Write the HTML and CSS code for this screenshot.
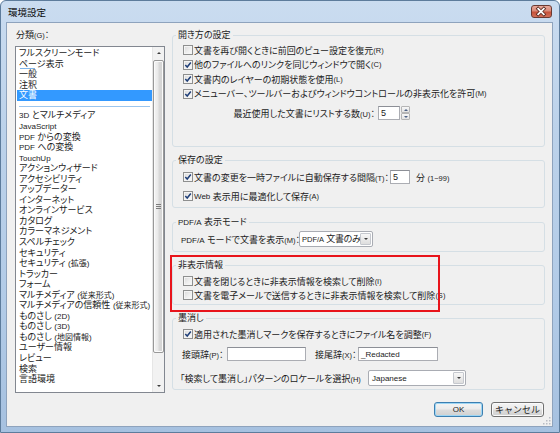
FILE: index.html
```html
<!DOCTYPE html>
<html lang="ja">
<head>
<meta charset="utf-8">
<title>環境設定</title>
<link rel="stylesheet" href="styles.css">
</head>
<body>
<div class="window">
  <div class="titlebar">
    <span class="title">環境設定</span>
    <span class="close"><svg viewBox="0 0 21 13" width="21" height="13"><path d="M7.5 3.5 L13.5 9.5 M13.5 3.5 L7.5 9.5" stroke="#5a2a22" stroke-width="3.6" stroke-linecap="square"/><path d="M7.5 3.5 L13.5 9.5 M13.5 3.5 L7.5 9.5" stroke="#ffffff" stroke-width="1.8" stroke-linecap="square"/></svg></span>
  </div>
  <div class="client">
    <div class="main">
      <div class="left">
        <div class="cat-label">分類<span class="mn">(G)</span>：</div>
        <div class="listbox">
          <ul class="items">
            <li>フルスクリーンモード</li>
            <li class="focus">ページ表示</li>
            <li>一般</li>
            <li>注釈</li>
            <li class="sel">文書</li>
            <li class="sep"></li>
            <li><span class="lt">3D</span> とマルチメディア</li>
            <li><span class="lt">JavaScript</span></li>
            <li><span class="lt">PDF</span> からの変換</li>
            <li><span class="lt">PDF</span> への変換</li>
            <li><span class="lt">TouchUp</span></li>
            <li>アクションウィザード</li>
            <li>アクセシビリティ</li>
            <li>アップデーター</li>
            <li>インターネット</li>
            <li>オンラインサービス</li>
            <li>カタログ</li>
            <li>カラーマネジメント</li>
            <li>スペルチェック</li>
            <li>セキュリティ</li>
            <li>セキュリティ <span class="sm">(拡張)</span></li>
            <li>トラッカー</li>
            <li>フォーム</li>
            <li>マルチメディア <span class="sm">(従来形式)</span></li>
            <li>マルチメディアの信頼性 <span class="sm">(従来形式)</span></li>
            <li>ものさし <span class="sm">(2D)</span></li>
            <li>ものさし <span class="sm">(3D)</span></li>
            <li>ものさし <span class="sm">(地図情報)</span></li>
            <li>ユーザー情報</li>
            <li>レビュー</li>
            <li>検索</li>
            <li>言語環境</li>
          </ul>
          <div class="scrollbar">
            <div class="sb-btn"><span class="arr up"></span></div>
            <div class="sb-track">
              <div class="sb-thumb"><span class="grip"></span></div>
            </div>
            <div class="sb-btn"><span class="arr down"></span></div>
          </div>
        </div>
      </div>
      <div class="right">
        <fieldset class="group g1">
          <legend>開き方の設定</legend>
          <div class="row cbrow"><span class="cb"></span>文書を再び開くときに前回のビュー設定を復元<span class="mn">(R)</span></div>
          <div class="row cbrow"><span class="cb"><svg viewBox="0 0 8 8" width="8" height="8"><path d="M1.3 4 L3.2 6 L6.8 1.5" fill="none" stroke="#1f3f78" stroke-width="1.5"/></svg></span>他のファイルへのリンクを同じウィンドウで開く<span class="mn">(C)</span></div>
          <div class="row cbrow"><span class="cb"><svg viewBox="0 0 8 8" width="8" height="8"><path d="M1.3 4 L3.2 6 L6.8 1.5" fill="none" stroke="#1f3f78" stroke-width="1.5"/></svg></span>文書内のレイヤーの初期状態を使用<span class="mn">(L)</span></div>
          <div class="row cbrow"><span class="cb"><svg viewBox="0 0 8 8" width="8" height="8"><path d="M1.3 4 L3.2 6 L6.8 1.5" fill="none" stroke="#1f3f78" stroke-width="1.5"/></svg></span>メニューバー、ツールバーおよびウィンドウコントロールの非表示化を許可<span class="mn">(M)</span></div>
          <div class="row spinrow">
            <span class="spinlabel">最近使用した文書にリストする数<span class="mn">(U)</span>：</span>
            <span class="input spin-in">5</span>
            <span class="spinbtns"><span class="sp"><span class="arr up"></span></span><span class="sp"><span class="arr down"></span></span></span>
          </div>
        </fieldset>

        <fieldset class="group g2">
          <legend>保存の設定</legend>
          <div class="row cbrow tall"><span class="cb"><svg viewBox="0 0 8 8" width="8" height="8"><path d="M1.3 4 L3.2 6 L6.8 1.5" fill="none" stroke="#1f3f78" stroke-width="1.5"/></svg></span><span class="savelabel">文書の変更を一時ファイルに自動保存する間隔<span class="mn">(T)</span>：</span><span class="input min-in">5</span><span class="unit">分 <span class="mn">(1~99)</span></span></div>
          <div class="row cbrow gap4"><span class="cb"><svg viewBox="0 0 8 8" width="8" height="8"><path d="M1.3 4 L3.2 6 L6.8 1.5" fill="none" stroke="#1f3f78" stroke-width="1.5"/></svg></span><span class="lt">Web</span>&nbsp;表示用に最適化して保存<span class="mn">(A)</span></div>
        </fieldset>

        <fieldset class="group g3">
          <legend><span class="lt">PDF/A</span> 表示モード</legend>
          <div class="row tall"><span class="pdfalabel"><span class="lt">PDF/A</span> モードで文書を表示<span class="mn">(M)</span>：</span><span class="combo pdfa-combo"><span class="combo-text"><span class="lt">PDF/A</span> 文書のみ</span><span class="combo-btn"><span class="arr down"></span></span></span></div>
        </fieldset>

        <fieldset class="group g4">
          <legend>非表示情報</legend>
          <div class="row cbrow"><span class="cb"></span>文書を閉じるときに非表示情報を検索して削除<span class="mn">(I)</span></div>
          <div class="row cbrow"><span class="cb"></span>文書を電子メールで送信するときに非表示情報を検索して削除<span class="mn">(S)</span></div>
        </fieldset>

        <fieldset class="group g5">
          <legend>墨消し</legend>
          <div class="row cbrow"><span class="cb"><svg viewBox="0 0 8 8" width="8" height="8"><path d="M1.3 4 L3.2 6 L6.8 1.5" fill="none" stroke="#1f3f78" stroke-width="1.5"/></svg></span>適用された墨消しマークを保存するときにファイル名を調整<span class="mn">(F)</span></div>
          <div class="row tall r2"><span class="fixlabel l-pre">接頭辞<span class="mn">(P)</span>：</span><span class="input text-in pre-in"></span><span class="fixlabel l-suf">接尾辞<span class="mn">(X)</span>：</span><span class="input text-in suf-in"><span class="lt">_Redacted</span></span></div>
          <div class="row tall r3"><span class="fixlabel l-loc">「検索して墨消し」パターンのロケールを選択<span class="mn">(H)</span></span><span class="combo loc-combo"><span class="combo-text"><span class="lt">Japanese</span></span><span class="combo-btn"><span class="arr down"></span></span></span></div>
        </fieldset>
      </div>
    </div>
    <div class="footer">
      <button class="btn default"><span class="lt">OK</span></button>
      <button class="btn">キャンセル</button>
    </div>
  </div>
  <div class="highlight"></div>
  <svg class="sizegrip" viewBox="0 0 8 8" width="8" height="8"><g fill="#b8bcc4"><rect x="6" y="0" width="1.5" height="1.5"/><rect x="3" y="3" width="1.5" height="1.5"/><rect x="6" y="3" width="1.5" height="1.5"/><rect x="0" y="6" width="1.5" height="1.5"/><rect x="3" y="6" width="1.5" height="1.5"/><rect x="6" y="6" width="1.5" height="1.5"/></g></svg>
</div>
</body>
</html>
```

FILE: styles.css
```css
* { box-sizing: border-box; }
html, body { margin: 0; padding: 0; }
body {
  width: 560px;
  height: 433px;
  overflow: hidden;
  font-family: "Liberation Sans", "Noto Sans CJK JP", sans-serif;
  font-size: 9px;
  color: #1b1b1b;
  font-feature-settings: "palt";
  background: #ffffff;
}

.window {
  position: relative;
  width: 560px;
  height: 433px;
  display: flex;
  flex-direction: column;
  padding: 0 6px 5px 5px;
  border: 1px solid #5d7c9c;
  border-radius: 6px 6px 0 0;
  background: linear-gradient(#cadcf0 0%, #bcd2ea 30%, #b2cbe7 70%, #a6c1e0 100%);
}

.titlebar {
  height: 21px;
  flex: none;
  display: flex;
  justify-content: space-between;
  align-items: flex-start;
}
.title {
  margin: 6px 0 0 2px;
  font-size: 9.5px;
  line-height: 11px;
  color: #0c0c0c;
}
.close {
  margin: 4px 1px 0 0;
  width: 21px;
  height: 13px;
  border: 1px solid #6b3a32;
  border-radius: 3px;
  background: linear-gradient(#e9a99c 0%, #d98a79 45%, #c6513a 55%, #d2705a 100%);
  display: flex;
}
.close svg { display: block; margin: -1px 0 0 -1px; }

.client {
  flex: 1;
  background: #f0f0f0;
  border: 1px solid #8ea3bd;
  padding: 5px 7px 9px 8px;
  display: flex;
  flex-direction: column;
}

.main {
  height: 365px;
  display: flex;
  gap: 7px;
}
.left {
  width: 150px;
  flex: none;
  display: flex;
  flex-direction: column;
}
.cat-label {
  height: 14px;
  line-height: 14px;
  margin: 0 0 4px 1px;
}
.mn {
  font-size: 7.5px;
  letter-spacing: 0;
}
.lt {
  font-size: 8px;
}
.sm {
  font-size: 8px;
}

.listbox {
  height: 347px;
  border: 1px solid #828790;
  background: #ffffff;
  display: flex;
}
.items {
  flex: 1;
  list-style: none;
  margin: 0;
  padding: 1px 0 0 1px;
}
.items li {
  height: 10.55px;
  line-height: 10.55px;
  padding-left: 2px;
  white-space: nowrap;
}
.items li.sel {
  background: #3399ff;
  color: #ffffff;
}
.items li.focus {
  background: linear-gradient(#7fb4e8, #7fb4e8) no-repeat 3px 100% / 15px 1px;
}
.items li.sep {
  height: 9.7px;
  background: linear-gradient(#9cc6ee, #9cc6ee) no-repeat 2px 5px / 131px 1px;
}

.scrollbar {
  width: 12px;
  flex: none;
  background: #f2f2f2;
  border-left: 1px solid #e6e6e6;
  display: flex;
  flex-direction: column;
}
.sb-btn {
  height: 12px;
  flex: none;
  display: flex;
  align-items: center;
  justify-content: center;
}
.sb-track {
  flex: 1;
  padding-top: 1px;
}
.sb-thumb {
  height: 293px;
  border: 1px solid #999999;
  border-radius: 2px;
  background: linear-gradient(to right, #f5f5f5 0%, #e9e9e9 45%, #d9d9d9 55%, #d2d2d2 100%);
  box-shadow: inset 0 0 0 1px #fbfbfb;
  display: flex;
  align-items: center;
  justify-content: center;
}
.grip {
  width: 5px;
  height: 5px;
  background: repeating-linear-gradient(#7c7c7c 0 1px, transparent 1px 2px);
}
.arr {
  width: 0;
  height: 0;
  border-left: 2.5px solid transparent;
  border-right: 2.5px solid transparent;
}
.arr.up { border-bottom: 2.5px solid #3c3c3c; }
.arr.down { border-top: 2.5px solid #3c3c3c; }

.right {
  flex: 1;
  padding-top: 1px;
  display: flex;
  flex-direction: column;
}

.group {
  margin: 0;
  padding: 0 8px;
  border: 1px solid #d5dfe5;
  border-radius: 3px;
  min-width: 0;
}
.group legend {
  padding: 0 2px;
  margin-left: -5px;
  height: 12px;
  line-height: 12px;
}
.g1 { padding-top: 2px; padding-bottom: 25px; }
.g2 { margin-top: 7px; padding-top: 3px; padding-bottom: 4px; }
.g3 { margin-top: 8px; padding-top: 3px; padding-bottom: 4px; }
.g4 { margin-top: 7px; padding-top: 3px; padding-bottom: 2px; }
.g5 { margin-top: 7px; padding-top: 3px; padding-bottom: 3px; }

.row {
  display: flex;
  align-items: center;
  height: 14.5px;
  white-space: nowrap;
}
.row.tall { height: 16px; }
.cbrow { margin-left: 2px; }
.g2 .cbrow, .g4 .cbrow, .g5 .cbrow { height: 14px; }
.g2 .cbrow.tall { height: 16px; }
.gap4 { margin-top: 4px; }
.cb {
  width: 10px;
  height: 10px;
  flex: none;
  margin-right: 1px;
  border: 1px solid #8e8f8f;
  background: linear-gradient(135deg, #d8d8d8 0%, #eeeeee 55%, #fbfbfb 100%);
  box-shadow: inset 0 0 0 1px #f4f4f4;
  display: flex;
  align-items: center;
  justify-content: center;
}
.cb svg { display: block; }

.spinrow {
  height: 16px;
  margin-top: 4px;
  justify-content: flex-end;
  padding-right: 126px;
}
.spinlabel { margin-right: 3px; }
.input {
  background: #ffffff;
  border: 1px solid #abadb3;
  border-top-color: #8c8f96;
  height: 14px;
  line-height: 12px;
  padding-left: 2px;
  flex: none;
}
.spin-in { width: 22px; }
.spinbtns {
  display: flex;
  flex-direction: column;
  margin-left: 1px;
  height: 14px;
}
.sp {
  width: 9px;
  height: 7px;
  border: 1px solid #b5b5b5;
  border-radius: 1px;
  background: linear-gradient(#f8f8f8, #e2e2e2);
  display: flex;
  align-items: center;
  justify-content: center;
}
.sp .arr { border-left-width: 2px; border-right-width: 2px; }
.sp .arr.up { border-bottom: 2px solid #4d6185; }
.sp .arr.down { border-top: 2px solid #4d6185; }

.savelabel { width: 196px; }
.min-in { width: 20px; }
.unit { margin-left: 6px; }

.pdfalabel { width: 118px; }
.combo {
  display: flex;
  height: 16px;
  border: 1px solid #a9acb3;
  border-radius: 2px;
  background: #ffffff;
  flex: none;
}
.combo-text {
  flex: 1;
  min-width: 0;
  padding-left: 3px;
  line-height: 14px;
}
.combo-btn {
  width: 11px;
  flex: none;
  margin: 1px 1px 1px 0;
  border: 1px solid #c5c8ce;
  border-radius: 1px;
  background: linear-gradient(#f7f7f7, #dedede);
  display: flex;
  align-items: center;
  justify-content: center;
}
.pdfa-combo { width: 74px; }
.pdfa-combo .combo-text { letter-spacing: -0.3px; padding-left: 2px; }
.pdfa-combo .combo-text .lt { font-size: 7.5px; letter-spacing: 0; }
.loc-combo { width: 98px; }

.r2 { margin-top: 5px; height: 14px; }
.r3 { margin-top: 8px; }
.fixlabel { flex: none; }
.l-pre { width: 45px; margin-left: 1px; }
.l-suf { width: 43px; margin-left: 9px; }
.text-in { width: 79px; height: 14px; }
.suf-in { width: 80px; }
.l-loc { width: 188px; margin-left: -1px; }

.footer {
  margin-top: 9px;
  display: flex;
  justify-content: flex-end;
  gap: 8px;
  padding-right: 1px;
}
.btn {
  height: 15px;
  padding: 0;
  font-family: inherit;
  font-size: 9px;
  color: #1b1b1b;
  border: 1px solid #707070;
  border-radius: 3px;
  background: linear-gradient(#f4f4f4 0%, #ebebeb 48%, #dddddd 52%, #d0d0d0 100%);
  box-shadow: inset 0 0 0 1px #fafafa;
  line-height: 12px;
}
.btn.default {
  width: 49px;
  border-color: #3c7fb1;
  box-shadow: inset 0 0 0 1px #9ed6f4;
}
.btn:not(.default) { width: 53px; }

.highlight {
  position: absolute;
  left: 169px;
  top: 254px;
  width: 270px;
  height: 57px;
  border: 2px solid #e8141b;
}
.sizegrip {
  position: absolute;
  right: 8px;
  bottom: 7px;
}
```
